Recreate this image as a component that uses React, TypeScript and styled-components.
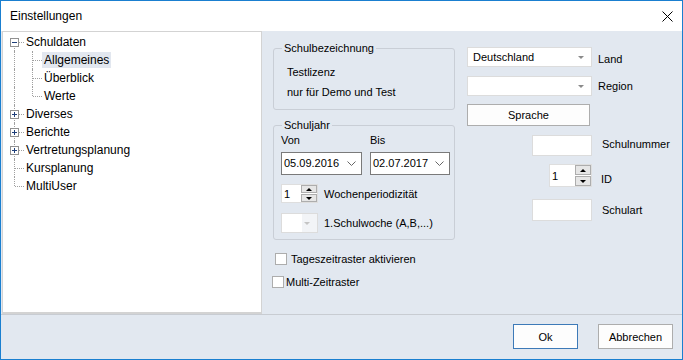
import styled, { createGlobalStyle } from 'styled-components';

const GlobalStyle = createGlobalStyle`
  html, body {
    margin: 0;
    padding: 0;
    background: #fff;
  }
  body {
    font-family: "Liberation Sans", Arial, sans-serif;
    font-size: 11px;
    color: #000;
  }
  * {
    box-sizing: border-box;
  }
`;

type TreeNode = {
  label: string;
  level: 0 | 1;
  toggle?: 'plus' | 'minus';
  first?: boolean;
  last?: boolean;
  selected?: boolean;
};

const tree: TreeNode[] = [
  { label: 'Schuldaten', level: 0, toggle: 'minus', first: true },
  { label: 'Allgemeines', level: 1, selected: true },
  { label: 'Überblick', level: 1 },
  { label: 'Werte', level: 1, last: true },
  { label: 'Diverses', level: 0, toggle: 'plus' },
  { label: 'Berichte', level: 0, toggle: 'plus' },
  { label: 'Vertretungsplanung', level: 0, toggle: 'plus' },
  { label: 'Kursplanung', level: 0 },
  { label: 'MultiUser', level: 0, last: true },
];

function Toggle({ kind }: { kind: 'plus' | 'minus' }) {
  return (
    <ToggleBox>
      <svg width="7" height="7" viewBox="0 0 7 7">
        <line x1="1" y1="3.5" x2="6" y2="3.5" stroke="#1f3f7a" strokeWidth="1" />
        {kind === 'plus' && <line x1="3.5" y1="1" x2="3.5" y2="6" stroke="#1f3f7a" strokeWidth="1" />}
      </svg>
    </ToggleBox>
  );
}

function Chevron() {
  return (
    <svg width="9" height="6" viewBox="0 0 9 6">
      <polyline points="0.5,0.5 4.5,4.5 8.5,0.5" fill="none" stroke="#666" strokeWidth="1" />
    </svg>
  );
}

function Spinner({ value, w, h }: { value: string; w: number; h: number }) {
  return (
    <SpinWrap $w={w} $h={h}>
      <SpinValue>{value}</SpinValue>
      <SpinButtons>
        <SpinBtn>
          <Tri $dir="up" />
        </SpinBtn>
        <SpinBtn>
          <Tri $dir="down" />
        </SpinBtn>
      </SpinButtons>
    </SpinWrap>
  );
}

export default function App() {
  return (
    <>
      <GlobalStyle />
      <Window>
        <TitleBar>
          <span>Einstellungen</span>
          <svg width="11" height="11" viewBox="0 0 11 11">
            <line x1="0.5" y1="0.5" x2="10.5" y2="10.5" stroke="#000" strokeWidth="1" />
            <line x1="10.5" y1="0.5" x2="0.5" y2="10.5" stroke="#000" strokeWidth="1" />
          </svg>
        </TitleBar>

        <Main>
          <Tree>
            {tree.map((n) => (
              <TreeRow key={n.label}>
                {n.level === 0 ? (
                  <Branch $w={19} $x={9} $top={!n.first} $bottom={!n.last} $stub>
                    {n.toggle && <Toggle kind={n.toggle} />}
                  </Branch>
                ) : (
                  <>
                    <Branch $w={19} $x={9} $top $bottom />
                    <Branch $w={18} $x={8} $top $bottom={!n.last} $stub />
                  </>
                )}
                <TreeLabel $selected={n.selected}>{n.label}</TreeLabel>
              </TreeRow>
            ))}
          </Tree>

          <Content>
            <LeftCol>
              <Group $mt={11} $h={68}>
                <Legend>Schulbezeichnung</Legend>
                <InfoText>
                  <div>Testlizenz</div>
                  <div>nur für Demo und Test</div>
                </InfoText>
              </Group>

              <Group $mt={9} $h={121}>
                <Legend>Schuljahr</Legend>
                <YearBody>
                  <DateGrid>
                    <span>Von</span>
                    <span>Bis</span>
                    <DateBox $w={81}>
                      05.09.2016
                      <Chevron />
                    </DateBox>
                    <DateBox $w={80}>
                      02.07.2017
                      <Chevron />
                    </DateBox>
                  </DateGrid>
                  <FieldRow $mt={9}>
                    <Spinner value="1" w={37} h={19} />
                    <span>Wochenperiodizität</span>
                  </FieldRow>
                  <FieldRow $mt={10}>
                    <Combo $w={37} $h={20} $disabled />
                    <span>1.Schulwoche (A,B,...)</span>
                  </FieldRow>
                </YearBody>
              </Group>

              <CheckRow $mt={13} $ml={2} $gap={4}>
                <Check />
                <span>Tageszeitraster aktivieren</span>
              </CheckRow>
              <CheckRow $mt={11} $ml={-1} $gap={2}>
                <Check />
                <span>Multi-Zeitraster</span>
              </CheckRow>
            </LeftCol>

            <RightCol>
              <RightRow $mt={16} $gap={6}>
                <Combo $w={125} $h={20} $value="Deutschland" />
                <SideLabel $dy={2}>Land</SideLabel>
              </RightRow>
              <RightRow $mt={9} $gap={6}>
                <Combo $w={125} $h={20} />
                <SideLabel>Region</SideLabel>
              </RightRow>
              <RightRow $mt={8}>
                <Button $w={123} $h={22}>Sprache</Button>
              </RightRow>
              <RightRow $mt={9} $gap={10}>
                <TextBox $w={60} $h={21} />
                <SideLabel $dy={-2}>Schulnummer</SideLabel>
              </RightRow>
              <RightRow $mt={8} $gap={9}>
                <Spinner value="1" w={43} h={23} />
                <SideLabel $dy={3}>ID</SideLabel>
              </RightRow>
              <RightRow $mt={12} $gap={10}>
                <TextBox $w={60} $h={22} />
                <SideLabel>Schulart</SideLabel>
              </RightRow>
            </RightCol>
          </Content>
        </Main>

        <Footer>
          <Button $w={65} $h={25} $primary>Ok</Button>
          <Button $w={75} $h={25}>Abbrechen</Button>
        </Footer>
      </Window>
    </>
  );
}

const Window = styled.div`
  width: 683px;
  height: 360px;
  border: 1px solid #1a7fd0;
  background: #e2e8f0;
  display: flex;
  flex-direction: column;
`;

const TitleBar = styled.div`
  height: 30px;
  background: #fff;
  display: flex;
  align-items: center;
  justify-content: space-between;
  padding: 0 9px 0 9px;
  font-size: 12px;
`;

const Main = styled.div`
  height: 283px;
  display: flex;
`;

const Tree = styled.div`
  width: 260px;
  margin-left: 1px;
  background: #fff;
  border: 1px solid #d3d3d3;
  border-bottom-width: 2px;
  padding: 1px 0 0 2px;
  font-size: 12px;
`;

const TreeRow = styled.div`
  display: flex;
  align-items: center;
  height: 18px;
`;

const Branch = styled.div<{ $w: number; $x: number; $top?: boolean; $bottom?: boolean; $stub?: boolean }>`
  position: relative;
  width: ${(p) => p.$w}px;
  height: 18px;
  flex: none;

  &::before {
    content: '';
    display: ${(p) => (p.$top || p.$bottom ? 'block' : 'none')};
    position: absolute;
    left: ${(p) => p.$x}px;
    top: ${(p) => (p.$top ? 0 : 9)}px;
    bottom: ${(p) => (p.$bottom ? 0 : 9)}px;
    border-left: 1px dotted #a0a0a0;
  }

  &::after {
    content: '';
    display: ${(p) => (p.$stub ? 'block' : 'none')};
    position: absolute;
    left: ${(p) => p.$x + 1}px;
    right: 0;
    top: 9px;
    border-top: 1px dotted #a0a0a0;
  }
`;

const ToggleBox = styled.div`
  position: absolute;
  left: 5px;
  top: 5px;
  width: 9px;
  height: 9px;
  border: 1px solid #919191;
  background: #fff;
  z-index: 1;
  display: flex;
  align-items: center;
  justify-content: center;
`;

const TreeLabel = styled.span<{ $selected?: boolean }>`
  padding: 0 2px;
  line-height: 16px;
  white-space: nowrap;
  background: ${(p) => (p.$selected ? '#e2e7ef' : 'transparent')};
`;

const Content = styled.div`
  flex: 1;
  display: flex;
  padding-left: 11px;
  gap: 12px;
`;

const LeftCol = styled.div`
  width: 182px;
  display: flex;
  flex-direction: column;
`;

const Group = styled.fieldset<{ $mt: number; $h: number }>`
  margin: ${(p) => p.$mt}px 0 0 0;
  padding: 0;
  min-width: 0;
  height: ${(p) => p.$h}px;
  border: 1px solid #c9ced6;
  border-radius: 3px;
`;

const Legend = styled.legend`
  margin-left: 8px;
  padding: 0 2px;
  line-height: 13px;
  font-size: 11px;
`;

const InfoText = styled.div`
  padding: 7px 0 0 13px;
  line-height: 20px;
`;

const YearBody = styled.div`
  padding: 2px 0 0 7px;
`;

const DateGrid = styled.div`
  display: grid;
  grid-template-columns: 89px 80px;
  grid-template-rows: 13px 23px;
  row-gap: 5px;
  line-height: 13px;
`;

const DateBox = styled.div<{ $w: number }>`
  width: ${(p) => p.$w}px;
  height: 23px;
  background: #fff;
  border: 1px solid #7a7a7a;
  display: flex;
  align-items: center;
  justify-content: space-between;
  padding: 0 5px 0 2px;
`;

const FieldRow = styled.div<{ $mt: number }>`
  margin-top: ${(p) => p.$mt}px;
  display: flex;
  align-items: center;
  gap: 6px;
`;

const SpinWrap = styled.div<{ $w: number; $h: number }>`
  width: ${(p) => p.$w}px;
  height: ${(p) => p.$h}px;
  display: flex;
  background: #fff;
  border: 1px solid #dedede;
  flex: none;
`;

const SpinValue = styled.div`
  flex: 1;
  padding-left: 2px;
  display: flex;
  align-items: center;
`;

const SpinButtons = styled.div`
  width: 16px;
  display: flex;
  flex-direction: column;
  gap: 1px;
`;

const SpinBtn = styled.div`
  flex: 1;
  background: #e6e6e6;
  border: 1px solid #adadad;
  display: flex;
  align-items: center;
  justify-content: center;
`;

const Tri = styled.span<{ $dir: 'up' | 'down' }>`
  width: 0;
  height: 0;
  border-left: 3px solid transparent;
  border-right: 3px solid transparent;
  ${(p) => (p.$dir === 'up' ? 'border-bottom: 3px solid #000;' : 'border-top: 3px solid #000;')}
`;

const Combo = styled.div<{ $w: number; $h: number; $value?: string; $disabled?: boolean }>`
  width: ${(p) => p.$w}px;
  height: ${(p) => p.$h}px;
  flex: none;
  position: relative;
  background: ${(p) => (p.$disabled ? 'linear-gradient(to right, #fff 0 20px, #f2f4f7 20px)' : '#fff')};
  border: 1px solid #dcdcdc;
  display: flex;
  align-items: center;
  padding-left: 5px;

  &::before {
    content: '${(p) => p.$value ?? ''}';
  }

  &::after {
    content: '';
    position: absolute;
    right: 7px;
    top: 50%;
    margin-top: -1px;
    border-left: 3px solid transparent;
    border-right: 3px solid transparent;
    border-top: 3px solid ${(p) => (p.$disabled ? '#c4c4c4' : '#8a8a8a')};
  }
`;

const CheckRow = styled.div<{ $mt: number; $ml: number; $gap: number }>`
  margin: ${(p) => p.$mt}px 0 0 ${(p) => p.$ml}px;
  display: flex;
  align-items: center;
  gap: ${(p) => p.$gap}px;
`;

const Check = styled.span`
  width: 12px;
  height: 12px;
  background: #fff;
  border: 1px solid #adadad;
  flex: none;
`;

const RightCol = styled.div`
  display: flex;
  flex-direction: column;
`;

const RightRow = styled.div<{ $mt: number; $gap?: number }>`
  margin-top: ${(p) => p.$mt}px;
  display: grid;
  grid-template-columns: 125px auto;
  column-gap: ${(p) => p.$gap ?? 6}px;
  align-items: center;
  justify-items: end;

  & > :first-child {
    justify-self: ${(p) => (p.$gap ? 'end' : 'start')};
  }
`;

const SideLabel = styled.span<{ $dy?: number }>`
  justify-self: start;
  position: relative;
  top: ${(p) => p.$dy ?? 0}px;
`;

const TextBox = styled.div<{ $w: number; $h: number }>`
  width: ${(p) => p.$w}px;
  height: ${(p) => p.$h}px;
  background: #fff;
  border: 1px solid #dcdcdc;
`;

const Button = styled.div<{ $w: number; $h: number; $primary?: boolean }>`
  width: ${(p) => p.$w}px;
  height: ${(p) => p.$h}px;
  background: #fdfdfd;
  border: 1px solid ${(p) => (p.$primary ? '#3d7ab8' : '#adadad')};
  display: flex;
  align-items: center;
  justify-content: center;
`;

const Footer = styled.div`
  flex: 1;
  border-top: 1px solid #c8ccd2;
  display: flex;
  justify-content: flex-end;
  align-items: flex-start;
  gap: 20px;
  padding: 9px 9px 0 0;
`;
